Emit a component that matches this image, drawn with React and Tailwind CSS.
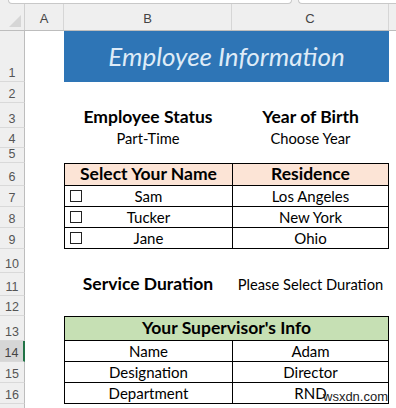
import React from "react";

const COLS = { a: "w-[39px]", b: "w-[168px]", c: "w-[157px]", d: "flex-1" };
const font = { fontFamily: "Lato, 'Noto Sans', sans-serif" };

function RowHead({ n, h, active }) {
  return (
    <div
      className={`w-[25px] shrink-0 flex items-end justify-center pb-[1px] border-b border-[#d9d9d9] text-[12.5px] leading-[13px] ${
        active
          ? "bg-[#d6d6d6] text-[#444] border-r-2 border-r-[#217346]"
          : "bg-[#efefef] text-[#555] border-r border-r-[#bdbdbd]"
      }`}
      style={{ height: h, fontFamily: "'Liberation Sans', sans-serif" }}
    >
      {n}
    </div>
  );
}

function Row({ n, h, active, children }) {
  return (
    <div className="flex" style={{ height: h }}>
      <RowHead n={n} h={h} active={active} />
      <div className={COLS.a} />
      {children}
      <div className={COLS.d} />
    </div>
  );
}

function Box() {
  return <span className="absolute left-[5px] top-1/2 -translate-y-1/2 w-[12px] h-[12px] border border-[#222] bg-white" />;
}

function TRow({ n, h, left, right, check, active }) {
  return (
    <Row n={n} h={h} active={active}>
      <div className={`${COLS.b} relative flex items-center justify-center border-l border-b border-black text-[15px]`}>
        {check && <Box />}
        {left}
      </div>
      <div className={`${COLS.c} flex items-center justify-center border-x border-b border-black text-[15px]`}>
        {right}
      </div>
    </Row>
  );
}

export default function App() {
  return (
    <div className="w-[396px] h-[408px] overflow-hidden bg-white text-black relative" style={font}>
      {/* tab strip */}
      <div className="h-[4px] bg-[#efefef] flex">
        <div className="ml-[8px] w-[284px] h-[4px] bg-white border-x border-b border-[#c8c8c8] rounded-b-[4px]" />
        <div className="ml-[6px] flex-1 h-[4px] bg-white border-l border-b border-[#c8c8c8] rounded-bl-[4px]" />
      </div>

      {/* column header */}
      <div className="flex h-[27px] bg-[#efefef] border-b border-[#bdbdbd] text-[13px] text-[#444]" style={{ fontFamily: "'Liberation Sans', sans-serif" }}>
        <div className="w-[25px] relative border-r border-[#d0d0d0]">
          <span className="absolute right-[3px] bottom-[3px] w-0 h-0 border-l-[12px] border-l-transparent border-b-[12px] border-b-[#d6d6d6]" />
        </div>
        <div className={`${COLS.a} flex items-end justify-center pb-[2px] border-r border-[#d6d6d6]`}>A</div>
        <div className={`${COLS.b} flex items-end justify-center pb-[2px] border-r border-[#d6d6d6]`}>B</div>
        <div className={`${COLS.c} flex items-end justify-center pb-[2px] border-r border-[#d6d6d6]`}>C</div>
        <div className={COLS.d} />
      </div>

      <Row n="1" h={51}>
        <div className="w-[325px] bg-[#2e75b6] flex items-center justify-center italic text-[26px] text-[#deebf7]">
          Employee Information
        </div>
      </Row>
      <Row n="2" h={21} />
      <Row n="3" h={25}>
        <div className={`${COLS.b} flex items-end justify-center font-bold text-[17.5px] leading-[22px]`}>Employee Status</div>
        <div className={`${COLS.c} flex items-end justify-center font-bold text-[17.5px] leading-[22px]`}>Year of Birth</div>
      </Row>
      <Row n="4" h={20}>
        <div className={`${COLS.b} flex items-center justify-center text-[14.7px]`}>Part-Time</div>
        <div className={`${COLS.c} flex items-center justify-center text-[14.7px]`}>Choose Year</div>
      </Row>
      <Row n="5" h={15} />

      <Row n="6" h={23}>
        <div className={`${COLS.b} flex items-center justify-center border-l border-y border-black bg-[#fce4d6] font-bold text-[17.5px]`}>Select Your Name</div>
        <div className={`${COLS.c} flex items-center justify-center border border-black bg-[#fce4d6] font-bold text-[17.5px]`}>Residence</div>
      </Row>
      <TRow n="7" h={21} left="Sam" right="Los Angeles" check />
      <TRow n="8" h={21} left="Tucker" right="New York" check />
      <TRow n="9" h={21} left="Jane" right="Ohio" check />

      <Row n="10" h={24} />
      <Row n="11" h={23}>
        <div className={`${COLS.b} flex items-center justify-center font-bold text-[17.5px]`}>Service Duration</div>
        <div className={`${COLS.c} flex items-center justify-center text-[14.7px]`}>Please Select Duration</div>
      </Row>
      <Row n="12" h={20} />

      <Row n="13" h={25}>
        <div className="w-[325px] flex items-center justify-center border border-black bg-[#c6e0b4] font-bold text-[17.5px]">
          Your Supervisor's Info
        </div>
      </Row>
      <TRow n="14" h={21} left="Name" right="Adam" active />
      <TRow n="15" h={21} left="Designation" right="Director" />
      <TRow n="16" h={21} left="Department" right="RND" />
      <Row n="" h={10} />

      <span
        className="absolute left-[323px] top-[390px] text-[13px] text-[#222] leading-none"
        style={{ fontFamily: "'Liberation Sans', sans-serif" }}
      >
        wsxdn.com
      </span>
    </div>
  );
}
